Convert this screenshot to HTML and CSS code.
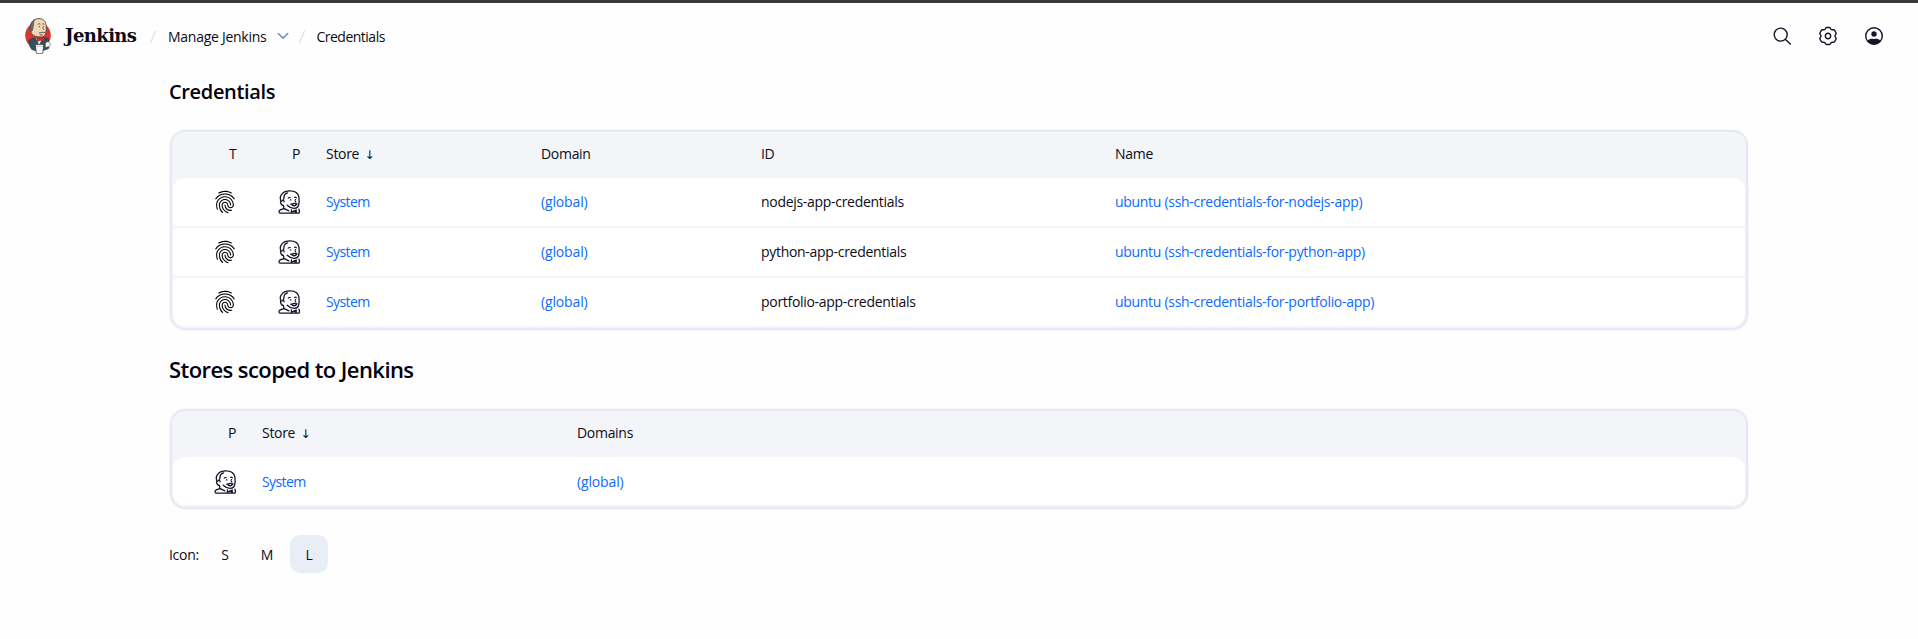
FILE: index.html
```html
<!DOCTYPE html>
<html lang="en">
<head>
<meta charset="utf-8">
<title>Credentials - Jenkins</title>
<link rel="stylesheet" href="styles.css">
</head>
<body>
<svg class="defs" width="0" height="0">
  <symbol id="fingerprint" viewBox="0 0 512 512"><path d="M390.42,75.28a10.45,10.45,0,0,1-5.32-1.44C340.72,50.08,302.35,40,256.35,40c-45.77,0-89.23,11.28-128.76,33.84C122,77,115.11,74.8,111.87,69a12.4,12.4,0,0,1,4.63-16.32A281.81,281.81,0,0,1,256.35,16c49.23,0,92.23,11.28,139.39,36.48a12,12,0,0,1,4.85,16.08A11.3,11.3,0,0,1,390.42,75.28Zm-330.79,126a11.73,11.73,0,0,1-6.7-2.16,12.26,12.26,0,0,1-2.78-16.8c22.89-33.6,52-60,86.69-78.48,72.58-38.84,165.51-39.12,238.32-.24,34.68,18.48,63.8,44.64,86.69,78a12.29,12.29,0,0,1-2.78,16.8,11.26,11.26,0,0,1-16.18-2.88c-20.8-30.24-47.15-54-78.36-70.56-66.34-35.28-151.18-35.28-217.29.24-31.44,16.8-57.79,40.8-78.59,71A10,10,0,0,1,59.63,201.28ZM204.1,491a10.66,10.66,0,0,1-8.09-3.6C175.9,466.48,165,453,149.55,424c-16-29.52-24.27-65.52-24.27-104.16,0-71.28,58.71-129.36,130.84-129.36S387,248.56,387,319.84a11.56,11.56,0,1,1-23.11,0c0-58.08-48.32-105.36-107.72-105.36S148.4,261.76,148.4,319.84c0,34.56,7.39,66.48,21.49,92.4,14.8,27.6,25,39.36,42.77,58.08a12.67,12.67,0,0,1,0,17A12.44,12.44,0,0,1,204.1,491Zm165.75-44.4c-27.51,0-51.78-7.2-71.66-21.36a129.1,129.1,0,0,1-55-105.36,11.57,11.57,0,1,1,23.12,0,104.28,104.28,0,0,0,44.84,85.44c16.41,11.52,35.6,17,58.72,17a147.41,147.41,0,0,0,24-2.4c6.24-1.2,12.25,3.12,13.4,9.84a11.92,11.92,0,0,1-9.47,13.92A152.28,152.28,0,0,1,369.85,446.56ZM323.38,496a13,13,0,0,1-3-.48c-36.76-10.56-60.8-24.72-86-50.4-32.37-33.36-50.16-77.76-50.16-125.28,0-38.88,31.9-70.56,71.19-70.56s71.2,31.68,71.2,70.56c0,25.68,21.5,46.56,48.08,46.56s48.08-20.88,48.08-46.56c0-90.48-75.13-163.92-167.59-163.92-65.65,0-125.75,37.92-152.79,96.72-9,19.44-13.64,42.24-13.64,67.2,0,18.72,1.61,48.24,15.48,86.64,2.32,6.24-.69,13.2-6.7,15.36a11.34,11.34,0,0,1-14.79-7,276.39,276.39,0,0,1-16.88-95c0-28.8,5.32-55,15.72-77.76,30.75-67,98.94-110.4,173.6-110.4,105.18,0,190.71,84.24,190.71,187.92,0,38.88-31.9,70.56-71.2,70.56s-71.2-31.68-71.2-70.56C303.5,294.16,282,273.28,255.42,273.28s-48.08,20.88-48.08,46.56c0,41,15.26,79.44,43.23,108.24,22,22.56,43,35,75.59,44.16,6.24,1.68,9.71,8.4,8.09,14.64A11.39,11.39,0,0,1,323.38,496Z"/></symbol>
  <symbol id="butler" viewBox="0 0 24 24"><g fill="none" stroke="currentColor" stroke-width="1.300" stroke-linejoin="round" stroke-linecap="round"><path d="M4.300 15.200C2.700 13.800 2.200 11.800 2.800 10.200 2 8.600 2.500 5.600 4 3.800 5.800 1.500 8.800.8 12 .8c4.800 0 8.300 2.300 8.900 6.200.4 3 .4 6.500-.4 8.800-.7 1.800-2.300 2.600-4.500 2.500-2.800-.1-5.200-1.400-6.800-3"/><path d="M3.700 11c1.100-1.100 2.400-.6 2.400.8M5.200 9.900C6.400 8.200 5.600 6.200 6.700 4.700c.6-.8 1.600-1.500 2.800-1.900"/><path d="M4.300 15.200c.9.100 1.400.6 1.400 1.400v2.100"/><path d="M5.700 18.700c-2 .4-4.500.7-4.700 2.900 0 .9.200 1.500.7 1.500h19.400c.6-1.400.5-2.800-.2-3.900"/><path d="M10.200 8.300c.4-.8 1.200-1 2-.7M16.600 7.400c.7-.4 1.400-.3 1.800.3M12.300 9.900h.6M17.300 9.600h.4M17 10.800l.9 1.300" stroke-width="1.100"/><path d="M12.800 14.200c1.200.2 2.200-.8 3.300-.8s1.800.6 2.800.4c-1 1.700-3 2.300-4.600 1.400" stroke-width="1.400"/><path d="M6.200 18.700l4.600 2.200M13.400 20v2.400l2.300-1.200M18.200 20v2.400l-2.500-1.200z"/></g></symbol>
</svg>
<header class="topbar">
  <a class="brand">
    <svg class="logo" viewBox="0 0 26 36">
      <ellipse cx="13" cy="17.300" rx="12.800" ry="13.300" fill="#d33833"/>
      <path d="M3.800 22.500 8.500 20l6.500 3 6-3.500 2.300 1.500.7 9c-1.800 2.200-12 4-17.200 1.500-2-2.500-3-6-3-9z" fill="#335061" stroke="#24303b" stroke-width=".6"/>
      <path d="M11 20.500l3 6 3-5z" fill="#fff"/>
      <path d="M7 16C5.500 14 5 11.500 5.300 9 5.700 3.500 9 .6 14 .6c4.800 0 7.300 3.500 7.300 8.400 0 6-.8 10-5.300 10-4 0-7-.5-9-3z" fill="#f0d6b7" stroke="#54443c" stroke-width=".9"/>
      <path d="M6.500 13.500C4.600 11 5.300 3.800 9.600 2 7.900 4.400 9.200 6 8.200 8c-.7 2 .2 4-1.700 5.500z" fill="#6d6b6d" stroke="#424242" stroke-width=".6"/>
      <path d="M12.800 6.400c1-.9 1.900-.7 2.600-.1m1.900-.2c.8-.5 1.600-.2 2 .3m-5.500 2.200h1.300m3 0h1m-1.600.7 1.300 2.400m-4.800 3.200c1.400.5 2.500-1.200 6-.4m-5.300 2.400h3" fill="none" stroke="#54443c" stroke-width=".9"/>
      <path d="m12.300 19.500 3.200 1.800 3.400-2.100.4 4.400-3.600-1.300-3.700 1.400z" fill="#d33833" stroke="#81201c" stroke-width=".6"/>
      <path d="M20.500 25.500c.5-1.600 2.500-2 3.800-1.300 1.300 1 1.300 3.700-.2 4.500l-3.800.5z" fill="#fff" stroke="#555" stroke-width=".6"/>
      <path d="M10.300 26.600h8.300l-.8 8.600c-1.900.8-4.600.8-6.400 0z" fill="#fff" stroke="#3d4247" stroke-width=".8"/>
      <path d="M11 28.500h6.800" stroke="#aaa" stroke-width=".6"/>
    </svg>
    <span class="brand-name">Jenkins</span>
  </a>
  <svg class="slash s1" viewBox="0 0 8 14"><path d="M6.600.7 1.400 13.300"/></svg>
  <a class="crumb">Manage Jenkins</a>
  <svg class="chevron" viewBox="0 0 12 8"><path d="m1.300 1.500 4.700 4.600 4.700-4.600"/></svg>
  <svg class="slash s2" viewBox="0 0 8 14"><path d="M6.600.7 1.400 13.300"/></svg>
  <a class="crumb last">Credentials</a>
  <nav class="actions">
    <svg viewBox="0 0 20 20"><circle cx="8.700" cy="8.600" r="6.500"/><path d="m13.500 13.400 4.800 4.700"/></svg>
    <svg viewBox="-10 -10 20 20"><path d="M-1.400-8.500h2.800Q2.300-8.500 2.600-7.300 3.100-6 4.800-6.200 6.200-6.500 6.800-5.300L8 -3.200Q8.500-2.200 7.500-1.200 6.300 0 7.500 1.200 8.500 2.200 8 3.200L6.800 5.300Q6.200 6.500 4.800 6.200 3.100 6 2.600 7.300 2.300 8.500 1.400 8.500h-2.800Q-2.300 8.500-2.600 7.300-3.100 6-4.800 6.200-6.200 6.500-6.800 5.300L-8 3.200Q-8.500 2.200-7.500 1.200-6.300 0-7.500-1.200-8.500-2.200-8-3.200L-6.800-5.300Q-6.200-6.500-4.800-6.200-3.100-6-2.600-7.300-2.300-8.500-1.400-8.500z"/><circle r="2.700"/></svg>
    <svg viewBox="-10 -10 20 20"><circle r="8.300"/><circle cy="-2" r="2.700" class="solid"/><path class="solid" d="M-6.500 5.200C-4.500 2.300-2.500 2.900 0 2.900s4.500-.6 6.500 2.300C3.500 9.400-3.500 9.400-6.500 5.200z"/></svg>
  </nav>
</header>
<main class="page">
  <h1>Credentials</h1>
  <div class="table">
    <div class="row head creds"><span class="t">T</span><span class="p">P</span><span>Store <i class="sort">↓</i></span><span>Domain</span><span>ID</span><span>Name</span></div>
    <div class="row creds"><svg class="finger"><use href="#fingerprint"/></svg><svg class="head-icon"><use href="#butler"/></svg><a class="store">System</a><a class="domain">(global)</a><span>nodejs-app-credentials</span><a>ubuntu (ssh-credentials-for-nodejs-app)</a></div>
    <div class="row creds"><svg class="finger"><use href="#fingerprint"/></svg><svg class="head-icon"><use href="#butler"/></svg><a class="store">System</a><a class="domain">(global)</a><span>python-app-credentials</span><a>ubuntu (ssh-credentials-for-python-app)</a></div>
    <div class="row creds"><svg class="finger"><use href="#fingerprint"/></svg><svg class="head-icon"><use href="#butler"/></svg><a class="store">System</a><a class="domain">(global)</a><span>portfolio-app-credentials</span><a>ubuntu (ssh-credentials-for-portfolio-app)</a></div>
  </div>
  <h2>Stores scoped to Jenkins</h2>
  <div class="table">
    <div class="row head stores"><span class="p">P</span><span>Store <i class="sort">↓</i></span><span>Domains</span></div>
    <div class="row stores"><svg class="head-icon"><use href="#butler"/></svg><a class="store">System</a><a class="domain">(global)</a></div>
  </div>
  <div class="sizes"><span class="label">Icon:</span><span class="size">S</span><span class="size">M</span><span class="size current">L</span></div>
</main>
</body>
</html>
```
FILE: styles.css
```css
* { box-sizing: border-box; }
body {
  margin: 0;
  min-height: 639px;
  border-top: 3px solid #3b3b3b;
  background: #fefefe;
  color: #0c0c18;
  font: 14px/20px "Open Sans", "Noto Sans", sans-serif;
  letter-spacing: -0.3px;
}
.defs { position: absolute; }
.topbar { display: flex; align-items: center; height: 66px; padding: 0 34px 0 25px; }
.brand { display: flex; align-items: center; width: 124px; }
.logo { width: 26px; height: 36px; margin-right: 14px; }
.brand-name { font: bold 18px/24px "DejaVu Serif", serif; letter-spacing: -0.6px; }
.slash { width: 8px; height: 14px; margin-top: 2px; fill: none; stroke: #dce2ec; stroke-width: 1.3; }
.s1 { margin-right: 11px; }
.s2 { margin-left: 9px; margin-right: 10px; }
.crumb { padding-top: 2px; letter-spacing: -0.27px; }
.last { letter-spacing: -0.5px; }
.chevron { width: 12px; height: 8px; margin: 0 0 0 11px; fill: none; stroke: #6b93c4; stroke-width: 1.6; stroke-linecap: round; stroke-linejoin: round; }
.actions { display: flex; gap: 26px; margin-left: auto; }
.actions svg { width: 20px; height: 20px; fill: none; stroke: #14142b; stroke-width: 1.4; stroke-linecap: round; }
.actions .solid { fill: #14142b; stroke: none; }
.page { width: 1580px; margin-left: 169px; }
h1, h2 { margin: 0; font-size: 20px; font-weight: 600; line-height: 28px; letter-spacing: -0.35px; color: #000010; }
h1 { padding-top: 9px; height: 60px; }
h2 { padding-top: 25px; height: 78px; font-size: 22px; letter-spacing: -0.57px; }
.table {
  display: grid;
  row-gap: 2px;
  padding: 0 1px 2px;
  border: 2px solid #e4e9f2;
  border-radius: 15px;
  outline: 1px solid #f4f6fa;
  outline-offset: 0;
  background: #f3f5f9;
  margin: 1px 1px 0;
}
.row { display: grid; align-items: center; height: 48px; background: #fff; border-radius: 4px; }
.creds { grid-template-columns: 105px 48px 215px 220px 354px 1fr; }
.stores { grid-template-columns: 89px 315px 1fr; }
.row.head { height: 44px; background: none; }
.head + .row { border-radius: 12px 12px 4px 4px; }
.row:last-child { border-bottom-left-radius: 12px; border-bottom-right-radius: 12px; }
.row a { color: #0b6aff; }
.row .store { letter-spacing: -0.6px; }
.row .domain { letter-spacing: -0.15px; }
.finger { width: 24px; height: 24px; margin-left: 40px; color: #14142b; }
.head-icon { width: 24px; height: 24px; color: #14142b; }
.stores .head-icon { margin-left: 41px; }
.row.stores:last-child { padding-top: 1px; }
.t { margin-left: 56px; }
.creds .p { margin-left: 14px; }
.stores .p { margin-left: 55px; }
.sort { font: 12px "DejaVu Sans", sans-serif; margin-left: 2px; }
.sizes { display: flex; align-items: center; margin-top: 25px; height: 40px; }
.label { width: 37px; padding-top: 1px; }
.size { width: 38px; height: 38px; margin-right: 4px; border-radius: 10px; line-height: 39px; text-align: center; }
.current { background: #e9edf5; }
```
